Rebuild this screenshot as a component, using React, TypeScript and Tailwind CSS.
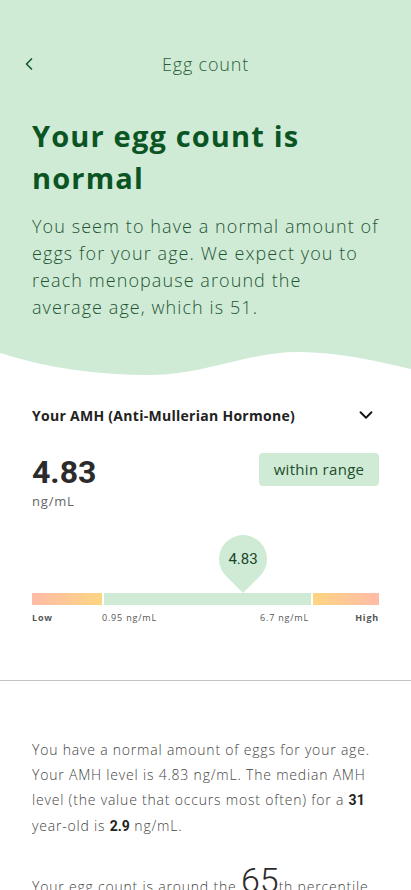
import React from "react"
import { ChevronLeft, ChevronDown } from "lucide-react"

const body = { fontFamily: '"Open Sans", "Noto Sans", sans-serif' }
const num = { fontFamily: 'Roboto, "Liberation Sans", sans-serif', letterSpacing: 0 }

const Wave = () => (
  <svg width="411" height="26" viewBox="0 0 411 26" className="block" preserveAspectRatio="none">
    <path
      d="M0 0 H411 V18 C 380 11, 345 2, 300 1 C 250 0, 205 24, 150 24 C 100 24, 50 18, 0 2 Z"
      fill="#cfebd6"
    />
  </svg>
)

const Pin = ({ value }: { value: string }) => (
  <div className="relative w-[48px] h-[58px]">
    <svg width="48" height="58" viewBox="0 0 48 58" className="absolute inset-0">
      <path d="M24 58 L7 41 A24 24 0 1 1 41 41 Z" fill="#cfebd6" />
    </svg>
    <div className="relative flex items-center justify-center h-[48px]">
      <span className="text-[15px] text-[#17452a]" style={num}>{value}</span>
    </div>
  </div>
)

const RangeBar = () => (
  <div className="pt-[25px]">
    <div className="h-[58px] pl-[187px]">
      <Pin value="4.83" />
    </div>
    <div className="flex h-[12px]">
      <div className="w-[70px] bg-gradient-to-r from-[#ffbba6] to-[#fed582]" />
      <div className="w-[2px] bg-white" />
      <div className="w-[207px] bg-[#cfebd6]" />
      <div className="w-[2px] bg-white" />
      <div className="flex-1 bg-gradient-to-r from-[#fed582] to-[#ffbba6]" />
    </div>
    <div className="flex mt-[7px] text-[9px] text-[#555] leading-[12px]">
      <span className="w-[70px] font-bold">Low</span>
      <span className="flex-1 flex justify-between pr-[2px]">
        <span>0.95 ng/mL</span>
        <span>6.7 ng/mL</span>
      </span>
      <span className="w-[68px] text-right font-bold">High</span>
    </div>
  </div>
)

export default function App() {
  return (
    <div className="w-[411px] min-h-[890px] bg-white overflow-hidden tracking-[0.05em]" style={body}>
      <div className="bg-[#cfebd6] px-[32px] pb-[30px]">
        <div className="relative flex items-center justify-center pt-[44px] h-[84px]">
          <ChevronLeft className="absolute -left-[13px] top-[54px] text-[#0f5a2a]" size={20} strokeWidth={2} />
          <span className="text-[18px] font-light text-[#2a5f36]">Egg count</span>
        </div>
        <h1 className="mt-[31px] text-[29px] leading-[42px] font-bold text-[#0b5424] tracking-[0.04em]">
          Your egg count is
          <br />
          normal
        </h1>
        <p className="mt-[14px] text-[18px] leading-[27px] font-light text-[#1f5433] tracking-[0.06em]">
          You seem to have a normal amount of eggs for your age. We expect you to reach menopause around the
          average{"\u00a0"}age, which is 51.
        </p>
      </div>
      <Wave />
      <div className="px-[32px] pt-[27px] pb-[56px]">
        <div className="flex items-center justify-between">
          <span className="text-[14px] font-bold text-[#222] tracking-[0.02em]">Your AMH (Anti-Mullerian Hormone)</span>
          <ChevronDown className="mr-[2px] text-[#111]" size={22} strokeWidth={2} />
        </div>
        <div className="flex items-start justify-between mt-[27px]">
          <div className="flex flex-col">
            <span className="text-[32px] leading-[38px] font-bold text-[#2b2b2b]" style={num}>4.83</span>
            <span className="text-[13px] leading-[18px] text-[#666] mt-[1px]">ng/mL</span>
          </div>
          <div className="flex items-center justify-center w-[120px] h-[33px] rounded-[4px] bg-[#cfebd6] text-[15px] text-[#1d4d2b] tracking-[0.02em]">
            within range
          </div>
        </div>
        <RangeBar />
      </div>
      <div className="border-t border-[#c4c4c4]" />
      <div className="px-[32px] pt-[56px] text-[14px] leading-[25px] font-light text-[#444]">
        <p>
          You have a normal amount of eggs for your age. Your AMH level is 4.83 ng/mL. The median AMH level (the value
          that occurs most often) for a <b className="font-bold text-[#222]" style={num}>31</b> year-old is{" "}
          <b className="font-bold text-[#222]" style={num}>2.9</b> ng/mL.
        </p>
        <p className="mt-[29px]">
          Your egg count is around the{" "}
          <span className="text-[34px] leading-[25px] text-[#2b2b2b]" style={num}>65</span>th percentile.
        </p>
      </div>
    </div>
  )
}
